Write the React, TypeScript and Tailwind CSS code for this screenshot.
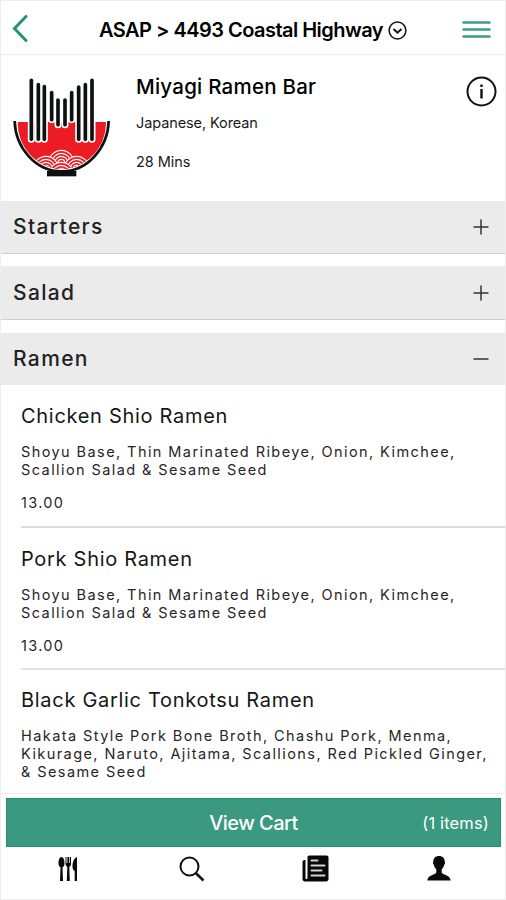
import React from "react";

const sticks = [
  [94, 57, 242], [115, 70, 242], [133, 76, 242], [155, 94, 183], [174, 116, 198],
  [195, 116, 198], [215, 94, 183], [236, 77, 242], [256, 70, 242], [276, 57, 242],
];

const waves = [
  [184, 308], [138, 326], [230, 326], [184, 344],
];

function BowlLogo() {
  return (
    <svg className="block h-[104px] w-[100px]" viewBox="36 48 300 312">
      <defs>
        <clipPath id="soup">
          <path d="M53 186 H318 A133 137 0 0 1 184 326 A133 137 0 0 1 53 186Z" />
        </clipPath>
      </defs>
      <path d="M44 183 C46 262 106 334 185 334 C264 334 324 262 326 183" fill="#fff" stroke="#0d1112" strokeWidth="8" />
      <g clipPath="url(#soup)">
        <rect x="40" y="186" width="300" height="150" fill="#ed1c24" />
        {waves.map(([x, y]) => (
          <g key={`${x}-${y}`} stroke="#fff" strokeWidth="3.5" fill="#ed1c24">
            <circle cx={x} cy={y} r="37" />
            <circle cx={x} cy={y} r="28" />
            <circle cx={x} cy={y} r="19" />
            <circle cx={x} cy={y} r="10" />
          </g>
        ))}
        {sticks.map(([x, a, b]) => (
          <line key={x} x1={x} x2={x} y1={a} y2={b - 4} stroke="#fff" strokeWidth="21" strokeLinecap="round" />
        ))}
      </g>
      {sticks.map(([x, a, b]) => (
        <line key={x} x1={x} x2={x} y1={a + 4} y2={b - 4} stroke="#0d1112" strokeWidth="11" strokeLinecap="round" />
      ))}
      <rect x="141" y="333" width="88" height="16" fill="#0d1112" />
    </svg>
  );
}

function Section({ name, open, className }: { name: string; open?: boolean; className: string }) {
  return (
    <div className={`flex items-center justify-between bg-[#ebebeb] pr-4 pl-3 ${className}`}>
      <h2 className="text-[21px] leading-6 font-medium tracking-[1.35px] text-[#222]">{name}</h2>
      <svg className="h-4 w-4" viewBox="0 0 16 16" stroke="#333" strokeWidth="1.5">
        <path d="M0.5 8H15.5" />
        {!open && <path d="M8 0.5V15.5" />}
      </svg>
    </div>
  );
}

function Dish({ name, lines, price, className }: { name: string; lines: string[]; price?: string; className: string }) {
  return (
    <article className={`ml-5 pt-[19px] ${className}`}>
      <h3 className="text-[20px] leading-6 tracking-[0.7px] whitespace-nowrap text-[#161616]">{name}</h3>
      <div className="mt-[15px] text-[14.5px] leading-[18.2px] tracking-[1.42px] whitespace-nowrap text-[#262626]">
        {lines.map((l) => (
          <p key={l}>{l}</p>
        ))}
      </div>
      {price && <p className="mt-[15px] text-[14.5px] leading-[18px] tracking-[1.3px] text-[#262626]">{price}</p>}
    </article>
  );
}

const shoyu = ["Shoyu Base, Thin Marinated Ribeye, Onion, Kimchee,", "Scallion Salad & Sesame Seed"];

export default function App() {
  return (
    <div className="flex h-[900px] w-[506px] flex-col overflow-hidden border-x border-t border-b border-[#eeeeee] bg-white font-['Inter','Liberation_Sans',sans-serif] text-black">
      <header className="flex h-[54px] shrink-0 items-center border-b border-[#ececec] pt-[5px]">
        <svg className="-mt-1 ml-[11px] h-[27px] w-4" viewBox="0 0 16 27" fill="none" stroke="#229472" strokeWidth="3">
          <path d="M14 1.5L2.5 13.5L14 25.5" strokeLinecap="round" />
        </svg>
        <div className="ml-[71px] flex items-center">
          <span className="w-[289px] text-[20px] leading-6 font-semibold tracking-[-0.53px] whitespace-nowrap">ASAP &gt; 4493 Coastal Highway</span>
          <svg className="h-[19px] w-[19px]" viewBox="0 0 19 19" fill="none" stroke="#111" strokeWidth="1.5">
            <circle cx="9.5" cy="9.5" r="8.4" />
            <path d="M5.5 8L9.5 11.7L13.5 8" strokeWidth="2" />
          </svg>
        </div>
        <svg className="-mt-0.5 ml-[55px] h-[19px] w-[29px]" viewBox="0 0 29 19" stroke="#3c9c80" strokeWidth="2.5" strokeLinecap="round">
          <path d="M1.5 2.5H27.500M1.5 9.5H27.500M1.5 16.5H27.500" />
        </svg>
      </header>

      <section className="flex h-[146px] shrink-0">
        <div className="mt-[21px] ml-[11px] w-[100px]">
          <BowlLogo />
        </div>
        <div className="mt-5 ml-6 flex-1 whitespace-nowrap">
          <h1 className="text-[20.5px] leading-6 font-medium tracking-[0.24px]">Miyagi Ramen Bar</h1>
          <p className="mt-[15px] text-[14.5px] leading-[18px] tracking-[-0.1px] text-[#1a1a1a]">Japanese, Korean</p>
          <p className="mt-[21px] text-[14.5px] leading-[18px] tracking-[-0.05px] text-[#1a1a1a]">28 Mins</p>
        </div>
        <svg className="mt-[21px] mr-[8px] h-[31px] w-[31px]" viewBox="0 0 31 31" fill="none" stroke="#111" strokeWidth="2">
          <circle cx="15.5" cy="15.5" r="14" />
          <path d="M15.5 13V22.5" strokeWidth="2.4" />
          <path d="M15.5 8.5V11" strokeWidth="2.4" />
        </svg>
      </section>

      <main className="flex h-[593px] shrink-0 flex-col overflow-hidden border-b border-[#ececec]">
        <Section name="Starters" className="h-[53px] shrink-0 border-b border-[#cfcfcf]" />
        <Section name="Salad" className="mt-3 h-[54px] shrink-0 border-b border-[#cfcfcf]" />
        <Section name="Ramen" open className="mt-[13px] h-[52px] shrink-0" />
        <Dish name="Chicken Shio Ramen" lines={shoyu} price="13.00" className="h-[143px] shrink-0 border-b-2 border-[#dcdcdc]" />
        <Dish name="Pork Shio Ramen" lines={shoyu} price="13.00" className="h-[142px] shrink-0 border-b-2 border-[#e2e2e2]" />
        <Dish
          name="Black Garlic Tonkotsu Ramen"
          lines={[
            "Hakata Style Pork Bone Broth, Chashu Pork, Menma,",
            "Kikurage, Naruto, Ajitama, Scallions, Red Pickled Ginger,",
            "& Sesame Seed",
          ]}
          className="-mt-px shrink-0"
        />
      </main>

      <button className="mt-1 mr-1 ml-[5px] grid h-[49px] shrink-0 grid-cols-[1fr_auto_1fr] items-center border border-[#1b9270] bg-[#3a997e] text-white">
        <span className="col-start-2 text-[20px] leading-6 font-medium tracking-[-0.55px]">View Cart</span>
        <span className="mr-[11px] justify-self-end text-[16.5px] leading-6 tracking-[0.15px]">(1 items)</span>
      </button>

      <nav className="flex flex-1 items-start pt-2">
        <svg className="mt-[2px] ml-[57px] h-6 w-5" viewBox="0 0 20 24" fill="#0a0a0a">
          <path d="M3.5 0C1.6 0 .5 3 .5 6C.5 8.5 1.4 9.8 2.5 10.5L2 24H5L4.500 10.500C5.700 9.800 6.500 8.500 6.500 6C6.500 3 5.400 0 3.500 0Z" />
          <path d="M7.500 0V6.500C7.500 8.500 8.500 9.500 9.300 10L8.800 24H11.800L11.300 10C12.200 9.500 13 8.500 13 6.500V0H12V6H11.300V0H9.400V6H8.500V0Z" />
          <path d="M19 0C16 1 14.500 5 14.500 9.500C14.500 12 15.500 13.500 16.700 14V24H19Z" />
        </svg>
        <svg className="mt-[1px] ml-[101px] h-[26px] w-[26px]" viewBox="0 0 26 26" fill="none" stroke="#111" strokeWidth="2">
          <circle cx="10.500" cy="10.500" r="9" />
          <path d="M16.700 17L24.500 24.500" strokeWidth="2.500" />
        </svg>
        <svg className="ml-[97px] h-[27px] w-[27px]" viewBox="0 0 27 27">
          <path d="M7.500 .5H24.500C25.800 .5 26.500 1.200 26.500 2.500V24C26.500 25.500 25.500 26.500 24 26.500H3C1.500 26.500 .5 25.500 .5 24V7C.5 5.500 1.500 5 3.500 5V23C3.500 24.500 5.500 24.500 5.500 23V2.500C5.500 1.200 6.200 .5 7.500 .5Z" fill="#080808" />
          <path d="M9.500 5.500H15.500M9.500 10.500H22.500M9.500 15.500H19.500M9.500 20.500H22.500" stroke="#d2d2d2" strokeWidth="2" strokeLinecap="round" />
        </svg>
        <svg className="mt-[1px] ml-[98px] h-[25px] w-6" viewBox="0 0 24 25" fill="#080808">
          <path d="M12 0C8.500 0 6.300 2.200 6.300 5.500C5.600 6 6 8.500 6.900 9C7.300 11 8.200 12.300 9.300 13.300V16.500C8.700 19 1 18.500 .3 24.500H23.700C23 18.500 15.300 19 14.700 16.500V13.300C15.800 12.300 16.700 11 17.100 9C18 8.500 18.400 6 17.700 5.500C17.700 2.200 15.500 0 12 0Z" />
        </svg>
      </nav>
    </div>
  );
}
